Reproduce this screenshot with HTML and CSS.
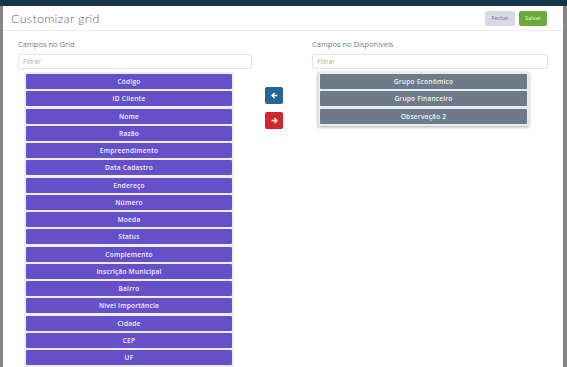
FILE: index.html
```html
<!DOCTYPE html>
<html lang="pt-BR">
<head>
    <meta charset="UTF-8">
    <title>Customizar grid</title>
    <link rel="stylesheet" href="styles.css">
</head>
<body>

    <div class="topbar"></div>

    <!-- Modal -->
    <div class="modal">
        <div class="modal-header">
            <h1>Customizar grid</h1>
            <div class="actions">
                <button class="btn btn-close">Fechar</button>
                <button class="btn btn-save">Salvar</button>
            </div>
        </div>

        <div class="modal-body">
            <!-- Campos no grid -->
            <div class="column">
                <label class="col-label">Campos no Grid</label>
                <input class="filter" type="text" placeholder="Filtrar">
                <ul class="field-list list-grid">
                    <li>Código</li>
                    <li>ID Cliente</li>
                    <li>Nome</li>
                    <li>Razão</li>
                    <li>Empreendimento</li>
                    <li>Data Cadastro</li>
                    <li>Endereço</li>
                    <li>Número</li>
                    <li>Moeda</li>
                    <li>Status</li>
                    <li>Complemento</li>
                    <li>Inscrição Municipal</li>
                    <li>Bairro</li>
                    <li>Nível Importância</li>
                    <li>Cidade</li>
                    <li>CEP</li>
                    <li>UF</li>
                </ul>
            </div>

            <!-- Botoes de mover -->
            <div class="move-buttons">
                <button class="move move-left">
                    <svg width="7" height="7" viewBox="0 0 10 10"><path d="M9 5H2M5 1.5L1.5 5 5 8.5" stroke="#fff" stroke-width="2" fill="none"/></svg>
                </button>
                <button class="move move-right">
                    <svg width="7" height="7" viewBox="0 0 10 10"><path d="M1 5h7M5 1.5L8.5 5 5 8.5" stroke="#fff" stroke-width="2" fill="none"/></svg>
                </button>
            </div>

            <!-- Campos disponiveis -->
            <div class="column">
                <label class="col-label">Campos no Disponíveis</label>
                <input class="filter" type="text" placeholder="Filtrar">
                <ul class="field-list list-available">
                    <li>Grupo Econômico</li>
                    <li>Grupo Financeiro</li>
                    <li>Observação 2</li>
                </ul>
            </div>
        </div>
    </div>

</body>
</html>
```

FILE: styles.css
```css
html, body {
    height: 100%;
}

body {
    margin: 0;
    height: 367px;
    overflow: hidden;
    background-color: #858585;
    font-family: "Open Sans", Arial, sans-serif;
}

.topbar {
    height: 6px;
    background-color: #17364b;
}

.modal {
    margin: 0 4px 0 3px;
    height: 361px;
    background-color: #fff;
}

.modal-header {
    display: flex;
    justify-content: space-between;
    align-items: center;
    height: 24px;
    padding: 0 16px 0 8px;
    border-bottom: 1px solid #eceef0;
}

.modal-header h1 {
    margin: 0;
    font-family: Lato, "Open Sans", sans-serif;
    font-size: 12.5px;
    font-weight: 300;
    letter-spacing: 0.3px;
    color: #5f6469;
}

.actions {
    display: flex;
    gap: 4px;
}

.btn {
    height: 15px;
    padding: 0;
    border: none;
    border-radius: 2px;
    font-family: "Open Sans", Arial, sans-serif;
    font-size: 5.5px;
}

.btn-close {
    width: 30px;
    background-color: #d6dae6;
    color: #6f7583;
}

.btn-save {
    width: 28px;
    background-color: #6aaa3b;
    color: #eaf5de;
}

.modal-body {
    display: grid;
    grid-template-columns: 234px 60px 236px;
    padding: 0 15px;
}

.col-label {
    display: block;
    height: 8px;
    margin-top: 9px;
    font-size: 7.5px;
    line-height: 8px;
    color: #777b80;
}

.filter {
    display: block;
    box-sizing: border-box;
    width: 100%;
    height: 15px;
    margin-top: 6px;
    padding: 0 4px;
    border: 1px solid #e2e4e7;
    border-radius: 2px;
    font-family: "Open Sans", Arial, sans-serif;
    font-size: 6.5px;
    color: #555;
}

.filter::placeholder {
    color: #a3a7ab;
}

.field-list {
    list-style: none;
    margin: 3px 0 0;
    padding: 2px;
    display: flex;
    flex-direction: column;
    gap: 2.25px;
}

.field-list li {
    height: 15px;
    line-height: 15px;
    text-align: center;
    font-family: "Open Sans", Arial, sans-serif;
    font-size: 6.6px;
    font-weight: 600;
    letter-spacing: 0.2px;
    color: #f1efff;
    border-radius: 1px;
}

.list-grid {
    margin-left: 6px;
    margin-right: 18px;
    background-color: #eceffa;
}

.list-grid li {
    background-color: #6650ca;
}

.list-available {
    margin-left: 6px;
    margin-right: 19px;
    background-color: #e6ebee;
    box-shadow: 0 1px 3px rgba(0, 0, 0, 0.35);
}

.list-available li {
    background-color: #6d7a8a;
    color: #eef2f6;
}

.move-buttons {
    display: flex;
    flex-direction: column;
    gap: 8px;
    padding: 56px 0 0 13px;
}

.move {
    display: flex;
    align-items: center;
    justify-content: center;
    width: 18px;
    height: 17px;
    padding: 0;
    border: none;
    border-radius: 2px;
}

.move-left {
    background-color: #266597;
}

.move-right {
    background-color: #d1262c;
}
```
